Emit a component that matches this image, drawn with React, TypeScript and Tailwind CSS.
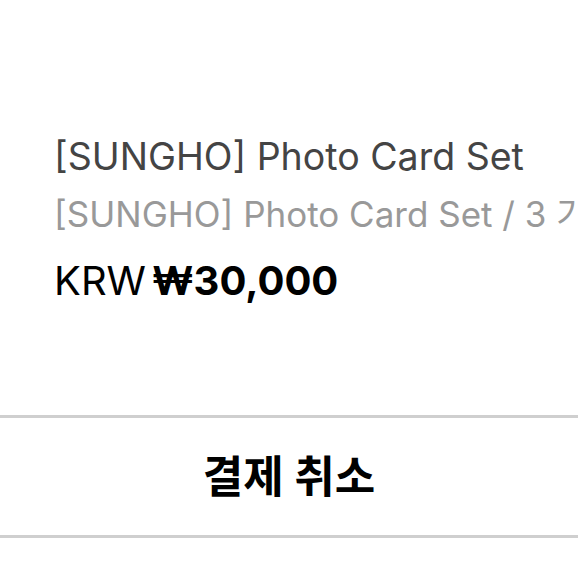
export default function App() {
  return (
    <main
      className="h-[578px] w-[578px] overflow-hidden bg-white"
      style={{ fontFamily: 'Inter, "Noto Sans CJK KR", sans-serif' }}
    >
      <div className="pl-[54px] pt-[134px] whitespace-nowrap">
        <p className="text-[37.5px] leading-[46px] text-[#444]">
          [SUNGHO] Photo Card Set
        </p>
        <p className="mt-[12px] text-[35px] leading-[44px] text-[#999]">
          [SUNGHO] Photo Card Set / 3 가지 선택
        </p>
        <p className="mt-[21px] text-[40px] leading-[48px] text-black">
          <span>KRW</span>
          <span className="ml-[6px] font-bold">₩30,000</span>
        </p>
      </div>

      <div className="mt-[110px] border-y-[3px] border-[#cfcfcf]">
        <button className="flex h-[117px] w-full items-center justify-center text-[44px] font-bold text-black">
          결제 취소
        </button>
      </div>
    </main>
  );
}
